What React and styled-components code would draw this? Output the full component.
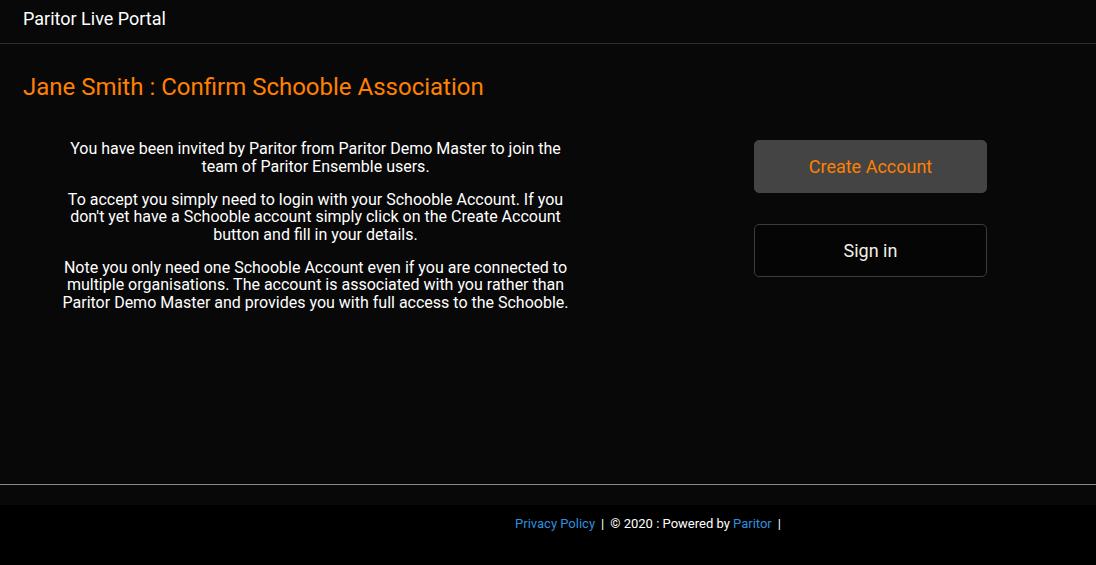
import styled, { createGlobalStyle } from "styled-components";

const GlobalStyle = createGlobalStyle`
  html, body {
    margin: 0;
    padding: 0;
    background: #080808;
    font-family: Roboto, "Liberation Sans", sans-serif;
  }
`;

const Page = styled.div`
  display: flex;
  flex-direction: column;
  min-height: 565px;
  background: #080808;
`;

const Header = styled.header`
  display: flex;
  align-items: center;
  height: 44px;
  padding: 0 23px 6px;
  border-bottom: 1px solid #2e2e2e;
  box-sizing: border-box;
  color: #fff;
  font-size: 18px;
`;

const Main = styled.main`
  height: 441px;
  padding: 0 23px;
  border-bottom: 1px solid #8a8a8a;
  box-sizing: border-box;
`;

const Title = styled.h1`
  margin: 0;
  padding-top: 29px;
  font-size: 24px;
  font-weight: 400;
  color: #ff8000;
  line-height: 28px;
`;

const Columns = styled.div`
  display: grid;
  grid-template-columns: 585px 1fr;
  margin-top: 39px;
  margin-right: -23px;
`;

const Intro = styled.div`
  color: #fff;
  font-size: 16px;
  text-align: center;
  padding: 0 37px;
`;

const Para = styled.p`
  margin: 0 0 15.5px;
  line-height: 17.5px;
`;

const Actions = styled.div`
  display: flex;
  flex-direction: column;
  align-items: center;
  gap: 31px;
  padding-left: 37px;
`;

const Button = styled.button`
  width: 233px;
  height: 53px;
  border-radius: 5px;
  font-family: inherit;
  font-size: 18px;
  cursor: pointer;
  background: ${(p) => (p.primary ? "#444" : "#050505")};
  color: ${(p) => (p.primary ? "#ff8000" : "#f4efe6")};
  border: 1px solid ${(p) => (p.primary ? "#444" : "#3c3c3c")};
`;

const Spacer = styled.div`
  height: 20px;
`;

const Footer = styled.footer`
  flex: 1;
  display: flex;
  justify-content: center;
  padding: 11px 0 0 206px;
  box-sizing: border-box;
  background: #000;
  color: #fff;
  font-size: 13px;
`;

const Link = styled.a`
  color: #2f8fdf;
  text-decoration: none;
`;

const Sep = styled.span`
  margin: 0 6px;
`;

export default function App() {
  return (
    <Page>
      <GlobalStyle />
      <Header>Paritor Live Portal</Header>
      <Main>
        <Title>Jane Smith : Confirm Schooble Association</Title>
        <Columns>
          <Intro>
            <Para>
              You have been invited by Paritor from Paritor Demo Master to join the
              team of Paritor Ensemble users.
            </Para>
            <Para>
              To accept you simply need to login with your Schooble Account. If you
              don't yet have a Schooble account simply click on the Create Account
              button and fill in your details.
            </Para>
            <Para>
              Note you only need one Schooble Account even if you are connected to
              multiple organisations. The account is associated with you rather than
              Paritor Demo Master and provides you with full access to the Schooble.
            </Para>
          </Intro>
          <Actions>
            <Button primary>Create Account</Button>
            <Button>Sign in</Button>
          </Actions>
        </Columns>
      </Main>
      <Spacer />
      <Footer>
        <div>
          <Link href="#">Privacy Policy</Link>
          <Sep>|</Sep>© 2020 : Powered by <Link href="#">Paritor</Link>
          <Sep>|</Sep>
        </div>
      </Footer>
    </Page>
  );
}
